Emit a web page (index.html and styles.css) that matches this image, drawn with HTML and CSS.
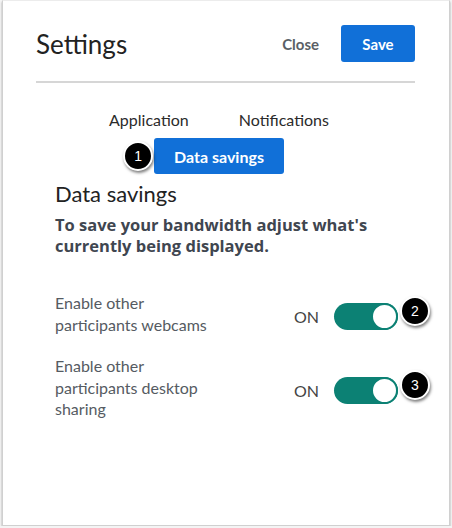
FILE: index.html
```html
<!DOCTYPE html>
<html lang="en">
<head>
    <meta charset="UTF-8">
    <meta name="viewport" content="width=device-width, initial-scale=1.0">
    <title>Settings</title>
    <link rel="stylesheet" href="styles.css">
</head>
<body>
    <div class="frame">
        <div class="header">
            <h1 class="title">Settings</h1>
            <button class="close">Close</button>
            <button class="save">Save</button>
        </div>
        <div class="divider"></div>

        <div class="tabs">
            <button class="tab">Application</button>
            <button class="tab">Notifications</button>
            <button class="tab active">Data savings<span class="badge badge-tab">1</span></button>
        </div>

        <div class="content">
            <h2 class="heading">Data savings</h2>
            <p class="intro">To save your bandwidth adjust what's currently being displayed.</p>

            <div class="row">
                <div class="label">Enable other participants webcams</div>
                <div class="control">
                    <span class="state">ON</span>
                    <span class="toggle"><span class="knob"></span></span>
                    <span class="badge badge-row">2</span>
                </div>
            </div>

            <div class="row">
                <div class="label">Enable other participants desktop sharing</div>
                <div class="control">
                    <span class="state">ON</span>
                    <span class="toggle"><span class="knob"></span></span>
                    <span class="badge badge-row">3</span>
                </div>
            </div>
        </div>
    </div>
</body>
</html>
```

FILE: styles.css
```css
body {
    margin: 0;
    background-color: #f4f4f4;
    font-family: Lato, "Open Sans", sans-serif;
}

.frame {
    box-sizing: border-box;
    width: 448px;
    height: 526px;
    margin: 0 0 0 2px;
    padding: 24px 34px 0 33px;
    background-color: #fff;
    border: 1px solid #d0d0d0;
    border-top-color: #ececec;
    box-shadow: 0 2px 2px rgba(0, 0, 0, 0.35);
}

button {
    font-family: inherit;
    border: none;
    background: none;
    cursor: pointer;
    padding: 0;
}

.header {
    display: flex;
    align-items: center;
    height: 37px;
}

.title {
    flex: 1;
    margin: 0;
    font-size: 26px;
    font-weight: 400;
    color: #222;
}

.close {
    font-size: 15px;
    font-weight: 700;
    color: #5a5f66;
    margin-right: 22px;
}

.save {
    width: 74px;
    height: 37px;
    border-radius: 3px;
    background-color: #1170d8;
    color: #fff;
    font-size: 15px;
    font-weight: 700;
}

.divider {
    height: 2px;
    margin-top: 19px;
    background-color: #d6d6d6;
}

.tabs {
    display: flex;
    flex-wrap: wrap;
    justify-content: center;
    column-gap: 12px;
    width: 290px;
    margin: 19px 0 0 38px;
}

.tab {
    position: relative;
    height: 36px;
    padding: 0 19px 2px;
    font-size: 16px;
    color: #2b2b2b;
}

.tab.active {
    background-color: #1170d8;
    color: #fff;
    font-weight: 700;
    font-size: 16px;
    padding: 0 20px;
    border-radius: 3px;
}

.badge {
    position: absolute;
    box-sizing: border-box;
    width: 30px;
    height: 30px;
    border-radius: 50%;
    background-color: #000;
    border: 2px solid #fff;
    box-shadow: 1px 2px 3px rgba(0, 0, 0, 0.5);
    color: #fff;
    font-family: "Liberation Sans", Arial, sans-serif;
    font-size: 14px;
    font-weight: 400;
    line-height: 26px;
    text-align: center;
}

.badge-tab {
    left: -31px;
    top: 3px;
}

.content {
    padding: 0 0 0 19px;
}

.heading {
    margin: 6px 0 0;
    font-size: 22px;
    font-weight: 400;
    color: #222;
}

.intro {
    margin: 8px 0 0;
    font-family: "Open Sans", Lato, sans-serif;
    font-size: 16.5px;
    font-weight: 700;
    line-height: 20.5px;
    color: #3f4650;
}

.row {
    display: flex;
    align-items: center;
    margin-top: 36px;
}

.row + .row {
    margin-top: 20px;
}

.label {
    flex: 1;
    max-width: 175px;
    font-size: 16px;
    line-height: 21.5px;
    color: #555b62;
}

.control {
    position: relative;
    display: flex;
    align-items: center;
    margin-left: auto;
    margin-right: 17px;
    padding-top: 6px;
}

.state {
    font-size: 16px;
    color: #444;
    margin-right: 15px;
}

.toggle {
    position: relative;
    box-sizing: border-box;
    width: 64px;
    height: 27px;
    border-radius: 14px;
    background-color: #0c8174;
}

.knob {
    position: absolute;
    right: 0;
    top: 0;
    box-sizing: border-box;
    width: 27px;
    height: 27px;
    border-radius: 50%;
    background-color: #fff;
    border: 2px solid #0c8174;
}

.badge-row {
    right: -32px;
    top: -1px;
}
```
